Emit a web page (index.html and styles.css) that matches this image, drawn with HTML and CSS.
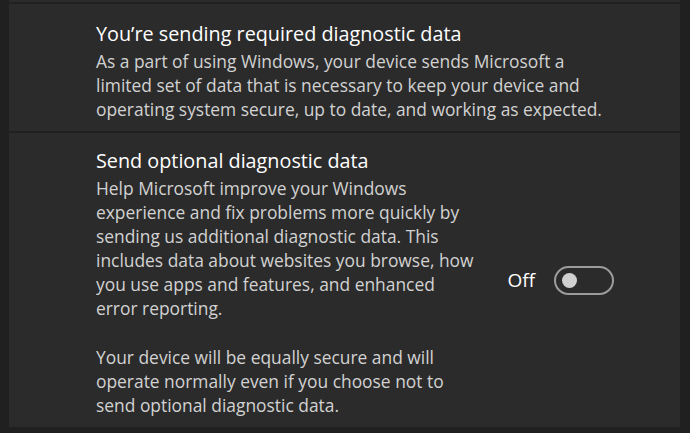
FILE: index.html
```html
<!DOCTYPE html>
<html lang="en">
<head>
    <meta charset="UTF-8">
    <title>Diagnostic data</title>
    <link rel="stylesheet" href="styles.css">
</head>
<body>
    <div class="page">
        <div class="card card-prev"></div>
        <div class="card card-info">
            <div class="card-text">
                <div class="card-title">You’re sending required diagnostic data</div>
                <div class="card-desc">As a part of using Windows, your device sends Microsoft a<br>limited set of data that is necessary to keep your device and<br>operating system secure, up to date, and working as expected.</div>
            </div>
        </div>
        <div class="card card-setting">
            <div class="card-text">
                <div class="card-title">Send optional diagnostic data</div>
                <div class="card-desc">Help Microsoft improve your Windows<br>experience and fix problems more quickly by<br>sending us additional diagnostic data. This<br>includes data about websites you browse, how<br>you use apps and features, and enhanced<br>error reporting.</div>
                <div class="card-desc card-note">Your device will be equally secure and will<br>operate normally even if you choose not to<br>send optional diagnostic data.</div>
            </div>
            <div class="toggle-wrap">
                <span class="toggle-label">Off</span>
                <div class="toggle"><span class="knob"></span></div>
            </div>
        </div>
    </div>
</body>
</html>
```

FILE: styles.css
```css
body { margin: 0; background: #202020; font-family: "Open Sans", "Noto Sans", sans-serif; color: #fff; height: 433px; overflow: hidden; }
.page { padding: 0 10px 0 9px; display: flex; flex-direction: column; gap: 2px; }
.card { background: #2b2b2b; }
.card-prev { height: 2px; }
.card-info { height: 127px; box-sizing: border-box; padding: 17px 0 0 87px; }
.card-setting { height: 294px; box-sizing: border-box; padding: 0 0 0 87px; display: flex; align-items: center; }
.card-setting .card-text { flex: 1; align-self: flex-start; margin-top: 15px; }
.card-title { font-size: 19.8px; line-height: 26px; color: #fff; margin-bottom: 2px; }
.card-desc { font-size: 17.4px; line-height: 24px; color: #d2d2d2; }
.card-note { margin-top: 25px; }
.toggle-wrap { display: flex; align-items: center; gap: 19px; margin-right: 66px; }
.toggle-label { font-size: 19px; color: #fff; }
.toggle { width: 56px; height: 25px; border: 2px solid #9c9c9c; border-radius: 15px; position: relative; }
.knob { position: absolute; left: 6px; top: 5px; width: 15px; height: 15px; border-radius: 50%; background: #d0d0d0; }
```
